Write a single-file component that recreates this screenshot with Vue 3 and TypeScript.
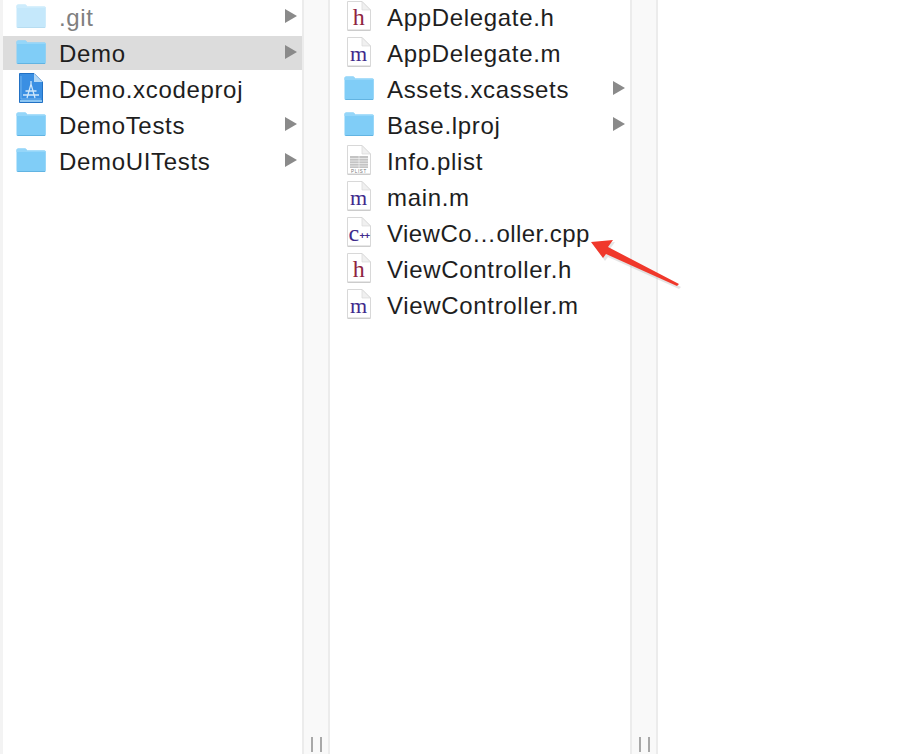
<script setup lang="ts">
type Kind = 'folder' | 'h' | 'm' | 'cpp' | 'plist' | 'xcode'

interface Entry {
  name: string
  kind: Kind
  dir?: boolean
  hidden?: boolean
  selected?: boolean
  tight?: boolean
}

const leftCol: Entry[] = [
  { name: '.git', kind: 'folder', dir: true, hidden: true },
  { name: 'Demo', kind: 'folder', dir: true, selected: true },
  { name: 'Demo.xcodeproj', kind: 'xcode' },
  { name: 'DemoTests', kind: 'folder', dir: true },
  { name: 'DemoUITests', kind: 'folder', dir: true },
]

const rightCol: Entry[] = [
  { name: 'AppDelegate.h', kind: 'h' },
  { name: 'AppDelegate.m', kind: 'm' },
  { name: 'Assets.xcassets', kind: 'folder', dir: true },
  { name: 'Base.lproj', kind: 'folder', dir: true },
  { name: 'Info.plist', kind: 'plist' },
  { name: 'main.m', kind: 'm' },
  { name: 'ViewCo…oller.cpp', kind: 'cpp', tight: true },
  { name: 'ViewController.h', kind: 'h' },
  { name: 'ViewController.m', kind: 'm' },
]

const columns = [leftCol, rightCol]
</script>

<template>
  <div class="finder">
    <template v-for="(col, i) in columns" :key="i">
      <div class="col" :class="i === 0 ? 'col-left' : 'col-right'">
        <div
          v-for="item in col"
          :key="item.name"
          class="row"
          :class="{ selected: item.selected, hidden: item.hidden }"
        >
          <span class="icon">
            <svg v-if="item.kind === 'folder'" width="30" height="24" viewBox="0 0 30 24">
              <path d="M.5 2Q.5 .5 2 .5H9Q10 .5 10.5 1.5L11 2.5H28.5Q29.8 2.5 29.8 4V22.5Q29.8 24 28.5 24H1.8Q.5 24 .5 22.5Z" fill="#80cdf7" />
              <path d="M.5 4V2Q.5 .5 2 .5H9Q10 .5 10.5 1.5L11 2.5H28.5Q29.8 2.5 29.8 4Z" fill="#95d6f9" />
              <rect x="1.5" y="23" width="27.5" height="1" fill="#62b4e2" />
            </svg>
            <svg v-else-if="item.kind === 'xcode'" width="24" height="30" viewBox="0 0 24 30">
              <path d="M.5 .5H15L23.5 9V29.5H.5Z" fill="#3a8fe3" stroke="#2271c4" />
              <path d="M15 .5V9H23.5Z" fill="#b4d9f6" />
              <path d="M2 3V26H22" fill="none" stroke="#7dbcf0" stroke-width=".8" />
              <path d="M4 22H20M8 25L12 11L16 25M6.5 18H17.5M12 11V8" fill="none" stroke="#cfe7fb" stroke-width="1.3" />
              <rect x="1" y="27" width="22" height="2" fill="#8cc6f3" />
            </svg>
            <svg v-else width="24" height="30" viewBox="0 0 24 30">
              <path d="M.5 .5H15L23.5 9V29.5H.5Z" fill="#fff" stroke="#d8d8d8" />
              <path d="M15 .5V9H23.5Z" fill="#f0f0f0" stroke="#d8d8d8" stroke-width=".7" />
              <rect x="1" y="28.6" width="22" height="1" fill="#c4c4c4" />
              <text v-if="item.kind === 'h'" x="12" y="24" class="glyph glyph-h" text-anchor="middle">h</text>
              <text v-else-if="item.kind === 'm'" x="12" y="24" class="glyph glyph-m" text-anchor="middle">m</text>
              <template v-else-if="item.kind === 'cpp'">
                <text x="1.5" y="24" class="glyph glyph-c">c</text>
                <text x="12.5" y="22" class="glyph-plus">++</text>
              </template>
              <template v-else>
                <path d="M3 11H21V23H3Z" fill="#c4c4c4" />
                <path d="M3 13.5H21M3 16H21M3 18.5H21M3 21H21M12 11V23" stroke="#f2f2f2" stroke-width=".7" />
                <text x="12" y="28" class="glyph-plist" text-anchor="middle">PLIST</text>
              </template>
            </svg>
          </span>
          <span class="name" :class="{ tight: item.tight }">{{ item.name }}</span>
          <span v-if="item.dir" class="chevron"></span>
        </div>
      </div>
      <div class="divider">
        <span class="grip"></span>
        <span class="grip"></span>
      </div>
    </template>

    <svg class="arrow" width="110" height="60" viewBox="585 235 110 60">
      <polygon points="593,244 615,242 610,249 681,287 679,289 608,257 605,261" fill="#999" opacity=".25" />
      <polygon points="591,242 613,240 608,247 679,284 677,286 606,254 603,258" fill="#f0382b" />
    </svg>
  </div>
</template>

<style scoped>
.finder {
  position: relative;
  display: flex;
  height: 754px;
  width: 900px;
  overflow: hidden;
  background: #fff;
  border-left: 3px solid #f3f3f3;
  box-sizing: border-box;
  font-family: "Liberation Sans", Arial, sans-serif;
}
.col {
  flex-shrink: 0;
}
.col-left {
  width: 299px;
}
.col-right {
  width: 300px;
}
.row {
  display: flex;
  align-items: center;
  height: 36px;
  padding: 0 5px 0 13px;
  color: #1e1e1e;
  font-size: 24px;
  letter-spacing: 0.67px;
}
.col-right .row {
  padding-left: 14px;
}
.row.selected {
  background: linear-gradient(#dcdcdc, #dcdcdc) top / 100% 34px no-repeat;
}
.row.hidden .name {
  color: #808080;
}
.row.hidden .icon {
  opacity: 0.45;
}
.icon {
  display: flex;
  justify-content: center;
  width: 30px;
  margin: 0 13px 4px 0;
}
.name {
  flex: 1;
  white-space: nowrap;
}
.name.tight {
  letter-spacing: 0.45px;
}
.chevron {
  width: 0;
  height: 0;
  margin-bottom: 4px;
  border-left: 12px solid #8a8a8a;
  border-top: 7px solid transparent;
  border-bottom: 7px solid transparent;
}
.divider {
  flex-shrink: 0;
  width: 28px;
  box-sizing: border-box;
  display: flex;
  justify-content: center;
  align-items: flex-end;
  gap: 7px;
  padding-bottom: 2px;
  background: #f9f9f9;
  border-left: 2px solid #ececec;
  border-right: 2px solid #ececec;
}
.grip {
  width: 2px;
  height: 15px;
  background: #a8a8a8;
}
.glyph {
  font-family: "Liberation Serif", serif;
}
.glyph-h {
  font-size: 24px;
  fill: #8e2340;
}
.glyph-m {
  font-size: 22px;
  fill: #3f2a8c;
}
.glyph-c {
  font-size: 24px;
  fill: #3f2a8c;
}
.glyph-plus {
  font-family: "Liberation Sans", sans-serif;
  font-size: 9.5px;
  font-weight: 700;
  letter-spacing: -0.5px;
  fill: #3f2a8c;
}
.glyph-plist {
  font-family: "Liberation Sans", sans-serif;
  font-size: 4.5px;
  fill: #777;
}
.arrow {
  position: absolute;
  left: 582px;
  top: 235px;
}
</style>

<style>
html,
body {
  margin: 0;
  background: #fff;
}
</style>
